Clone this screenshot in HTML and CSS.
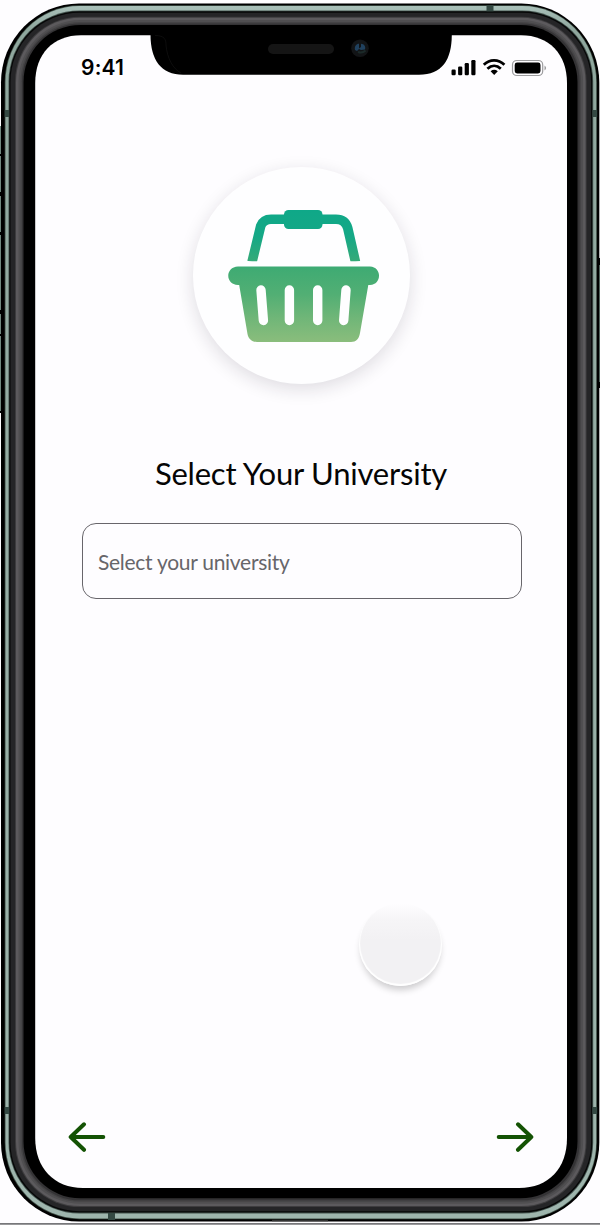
FILE: index.html
```html
<!DOCTYPE html>
<html lang="en">
<head>
<meta charset="utf-8">
<title>Select Your University</title>
<link rel="stylesheet" href="styles.css">
</head>
<body>
<div class="phone">
  <svg class="bezel" viewBox="0 0 600 1225" aria-hidden="true">
    <defs>
      <linearGradient id="rail" x1="0" y1="0" x2="0" y2="1">
        <stop offset="0" stop-color="#a9c0b9"/><stop offset=".02" stop-color="#8fa79e"/><stop offset="1" stop-color="#9eb5ad"/>
      </linearGradient>
    </defs>
    <path d="M0 1223.8H600" stroke="#77777a" stroke-width="1.8"/>
    <g class="buttons">
      <rect x="-4" y="126" width="10" height="287"/>
      <rect x="595" y="258" width="8" height="130"/>
    </g>
    <g fill="#718980">
      <rect x="0" y="126" width="1" height="28"/><rect x="0" y="156" width="2.4" height="36"/>
      <rect x="0" y="196" width="1" height="36"/><rect x="0" y="235" width="2.4" height="75"/>
      <rect x="0" y="314" width="1" height="20"/><rect x="0" y="336" width="2.4" height="75"/>
      <rect x="599" y="265" width="1" height="117"/>
    </g>
    <rect x="1" y="3.6" width="598.3" height="1217.8" rx="78" ry="79"/>
    <rect x="4.7" y="5.2" width="592.2" height="1214" rx="75" ry="77" fill="#405047"/>
    <rect x="5.5" y="6" width="590.7" height="1212.4" rx="74" ry="76" fill="url(#rail)"/>
    <rect x="8.5" y="10.5" width="584.7" height="1203" rx="71" ry="71" fill="#43524d"/>
    <rect x="9.3" y="11.3" width="583" height="1201.3" rx="70" fill="#060707"/>
    <rect x="10.5" y="12.7" width="580.6" height="1198.5" rx="69" fill="#252527"/>
    <rect x="15" y="16.7" width="571.6" height="1190.4" rx="65" fill="#3d3c3e"/>
    <rect x="16" y="17.7" width="569.6" height="1188.4" rx="64" fill="#5c5a5d"/>
    <rect x="18.5" y="20" width="564.6" height="1183.8" rx="62" fill="#504f51"/>
    <rect x="20.5" y="22" width="560.6" height="1179.8" rx="60" fill="#454446"/>
    <rect x="22" y="23.5" width="557.6" height="1176.8" rx="58" fill="#343335"/>
    <rect x="23.5" y="25" width="554" height="1173.3" rx="57"/>
    <g fill="#344943">
      <rect x="486.5" y="5.3" width="7" height="6"/><rect x="108" y="1213" width="7" height="7"/>
      <rect x="4.7" y="110" width="4.5" height="7"/><rect x="592.7" y="110" width="4.5" height="7"/>
      <rect x="4.7" y="1107" width="4.5" height="7"/><rect x="592.7" y="1107" width="4.5" height="7"/>
    </g>
    <path d="M272 1220.5H328" stroke="#333" stroke-width="1.5"/>
    <path fill="#fefdff" d="M81 35.2H521C549 35.2 567 54 567 83V1138C567 1168 549 1188 519 1188H83C54 1188 35.2 1168 35.2 1138V83C35.2 54 53 35.2 81 35.2Z"/>
    <path d="M150.5 34.5H451.8C451.8 60 442 74.7 419 74.7H183C161 74.7 150.5 60 150.5 34.5Z"/>
    <path d="M155 35.5C165 35.5 166 40 166 45C167 58 173 69 181 73" fill="none" stroke="#151515" stroke-width=".6"/>
    <rect x="268" y="44" width="66" height="10" rx="5" fill="#151515"/>
    <circle cx="360" cy="48.3" r="8.8" fill="#121416"/>
    <path d="M355 50C354 46 357 43.5 359 43.8V48.5L361 47V43.7C364 44 366 46 365 49.5L361 50L359 49L357 51Z" fill="#20415e"/>
    <path d="M358 52C361 53 364 52 365.5 50.5" stroke="#1b2a29" stroke-width="2" fill="none"/>
  </svg>

  <main class="screen">
    <header class="status">
      <span class="clock">9:41</span>
      <svg class="indicators" viewBox="0 0 98 20" aria-hidden="true">
        <rect x="1.5" y="11.5" width="4.2" height="5.7" rx="1.2"/><rect x="8.1" y="8.5" width="4.2" height="8.7" rx="1.2"/>
        <rect x="14.7" y="5" width="4.2" height="12.2" rx="1.2"/><rect x="21.3" y="2" width="4.2" height="15.2" rx="1.2"/>
        <g fill="none" stroke="#000" stroke-width="2.8">
          <path d="M33.8 6.8C39.8 .9 48.3 .9 54.4 6.8"/><path d="M37.4 10.7C41.5 6.9 46.8 6.9 50.8 10.7"/>
        </g>
        <path d="M40.6 13.2Q44.2 10.4 47.8 13.2L44.2 16.9Z"/>
        <rect x="62.5" y="2.5" width="30.2" height="15" rx="4.3" fill="none" stroke="#9c9c9e" stroke-width="1.2"/>
        <rect x="64.7" y="4.5" width="25.8" height="11" rx="2.4"/>
        <path d="M94.5 7.5Q97.8 10 94.5 12.5Z" fill="#9c9c9e"/>
      </svg>
    </header>

    <section class="content">
      <div class="logo">
        <svg class="basket" viewBox="0 0 152 134" role="img" aria-label="Shopping basket">
          <defs>
            <linearGradient id="basketFill" gradientUnits="userSpaceOnUse" x1="0" y1="0" x2="0" y2="132">
              <stop offset="0" stop-color="#0fa888"/><stop offset=".2" stop-color="#15a886"/>
              <stop offset=".45" stop-color="#40ab73"/><stop offset=".64" stop-color="#52af74"/>
              <stop offset=".82" stop-color="#70b678"/><stop offset="1" stop-color="#8abd7c"/>
            </linearGradient>
          </defs>
          <path d="M24 52L32.7 16C34.5 11.5 38 9.3 43 9.3H108C114 9.3 118 12 119.7 18L127.5 52" fill="none" stroke="url(#basketFill)" stroke-width="9.6"/>
          <rect x="56" y="0" width="38.5" height="19" rx="4.5" fill="url(#basketFill)"/>
          <path d="M14 51.2H136V56H14Z" fill="#fefeff"/>
          <path d="M10 56.5H142C154 57 154 74.5 142 75H140.3L132 123C131 129 128 132 123 132H29C24 132 20.5 129 19.5 124L11.2 75H10C-3 74.5-3 57 10 56.5Z" fill="url(#basketFill)"/>
          <g stroke="#fefeff" stroke-width="9.4" stroke-linecap="round">
            <path d="M33 80L35.4 110.5M61.4 80V110.5M89.7 80V110.5M118 80L115.7 110.5"/>
          </g>
        </svg>
      </div>
      <h1 class="title">Select Your University</h1>
      <div class="field">Select your university</div>
    </section>

    <nav class="pager">
      <svg class="arrow" viewBox="0 0 38 32" role="img" aria-label="Back"><path d="M35.3 16H2.7M16 3.3L2.7 16L16 28.8"/></svg>
      <svg class="arrow" viewBox="0 0 38 32" role="img" aria-label="Next"><path d="M2.7 16H35.3M22 3.3L35.3 16L22 28.8"/></svg>
    </nav>
  </main>
  <div class="touch"></div>
</div>
</body>
</html>
```
FILE: styles.css
```css
* { box-sizing: border-box; }
body { margin: 0; background: #fefdff; font-family: Lato, "Liberation Sans", sans-serif; }
.phone { position: relative; width: 600px; height: 1225px; overflow: hidden; }
.bezel { position: absolute; inset: 0; width: 600px; height: 1225px; }
.screen {
  position: relative;
  height: 1188px;
  padding: 57px 33px 35px 35px;
  display: flex;
  flex-direction: column;
}
.status { display: flex; justify-content: space-between; height: 22px; padding: 0 19px 0 46px; }
.clock { font: 600 21px/22px Inter, sans-serif; letter-spacing: .2px; color: #000; }
.indicators { width: 98px; height: 20px; margin-top: 1px; }
.content { flex: 1; display: flex; flex-direction: column; align-items: center; padding-top: 88px; }
.logo {
  width: 217px;
  height: 217px;
  border-radius: 50%;
  padding: 43px 0 0 35px;
  background: #fefeff;
  box-shadow: 0 5px 18px rgba(30, 20, 40, .14);
}
.basket { display: block; width: 152px; height: 134px; }
.title { margin: 69px 0 0; font-size: 31px; line-height: 40px; font-weight: 400; letter-spacing: -.22px; white-space: nowrap; color: #050505; }
.field {
  width: 440px;
  height: 76px;
  margin: 30px 0 0 2px;
  padding: 0 15px;
  border: 1px solid #68666b;
  border-radius: 14px;
  font-size: 21px;
  line-height: 76px;
  letter-spacing: -.28px;
  color: #67666a;
}
.pager { display: flex; justify-content: space-between; padding: 0 33px; }
.arrow { width: 38px; height: 32px; fill: none; stroke: #145304; stroke-width: 4; stroke-linecap: round; stroke-linejoin: round; }
.touch {
  position: absolute;
  left: 358.5px;
  top: 903px;
  width: 83px;
  height: 83px;
  border-radius: 50%;
  background: linear-gradient(#fefdff 0, #f6f5f7 20%, #f2f1f3 45%);
  box-shadow: inset 0 -1px 1px 1px #fff, 0 6px 7px -2px rgba(0, 0, 0, .2);
}
```
